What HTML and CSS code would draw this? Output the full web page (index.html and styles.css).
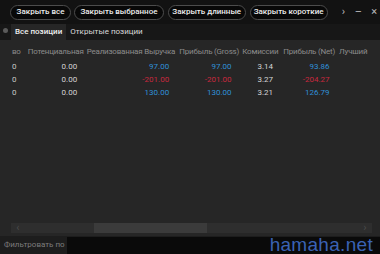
FILE: index.html
```html
<!doctype html>
<html>
  <head>
    <meta charset="utf-8">
    <link rel="stylesheet" href="styles.css">
  </head>
  <body>
    <div id="window">
      <div class="toolbar">
        <button class="pill w-all">Закрыть все</button>
        <button class="pill w-sel">Закрыть выбранное</button>
        <button class="pill w-long">Закрыть длинные</button>
        <button class="pill w-short">Закрыть короткие</button>
        <span class="tool more">&#8250;</span>
        <span class="tool min">&#8211;</span>
        <span class="tool close">&#215;</span>
      </div>

      <div class="tabs">
        <span class="dot"></span>
        <span class="tab active">Все позиции</span>
        <span class="tab">Открытые позиции</span>
      </div>

      <div class="grid">
        <div class="row head">
          <div class="c c1">во</div>
          <div class="c c2">Потенциальная</div>
          <div class="c c3">Реализованная Выручка</div>
          <div class="c c4">Прибыль (Gross)</div>
          <div class="c c5">Комиссии</div>
          <div class="c c6">Прибыль (Net)</div>
          <div class="c c7">Лучший</div>
        </div>
        <div class="row">
          <div class="c c1">0</div>
          <div class="c c2 num">0.00</div>
          <div class="c c3 num pos">97.00</div>
          <div class="c c4 num pos">97.00</div>
          <div class="c c5 num">3.14</div>
          <div class="c c6 num pos">93.86</div>
          <div class="c c7"></div>
        </div>
        <div class="row">
          <div class="c c1">0</div>
          <div class="c c2 num">0.00</div>
          <div class="c c3 num neg">-201.00</div>
          <div class="c c4 num neg">-201.00</div>
          <div class="c c5 num">3.27</div>
          <div class="c c6 num neg">-204.27</div>
          <div class="c c7"></div>
        </div>
        <div class="row">
          <div class="c c1">0</div>
          <div class="c c2 num">0.00</div>
          <div class="c c3 num pos">130.00</div>
          <div class="c c4 num pos">130.00</div>
          <div class="c c5 num">3.21</div>
          <div class="c c6 num pos">126.79</div>
          <div class="c c7"></div>
        </div>

        <div class="spacer"></div>

        <div class="hscroll">
          <span class="arrow">&#8249;</span>
          <div class="track">
            <div class="thumb"></div>
          </div>
          <span class="arrow">&#8250;</span>
        </div>
      </div>

      <div class="filter">
        <span class="label">Фильтровать по</span>
        <div class="input"></div>
      </div>

      <div class="watermark">hamaha.net</div>
    </div>
  </body>
</html>
```

FILE: styles.css
```css
html, body {
  margin: 0;
  padding: 0;
  background: #121212;
}

body {
  font-family: Roboto, "Noto Sans", sans-serif;
  font-size: 8px;
  color: #c8c8c8;
}

#window {
  position: relative;
  width: 380px;
  height: 254px;
  display: flex;
  flex-direction: column;
  overflow: hidden;
}

/* top buttons */

.toolbar {
  height: 24px;
  display: flex;
  align-items: center;
  padding: 0 0 0 10px;
  background: #121212;
}

.pill {
  height: 15px;
  padding: 0;
  margin-right: 3px;
  border: 1px solid #4c4c4c;
  border-radius: 8px;
  background: #080808;
  color: #ececec;
  font-family: inherit;
  font-size: 8px;
  font-weight: 500;
  line-height: 12px;
  white-space: nowrap;
  text-align: center;
}

.w-all { width: 62px; }
.w-sel { width: 91px; }
.w-long { width: 79px; margin-left: 1px; }
.w-short { width: 79px; margin-left: 1px; }

.tool {
  color: #bbbbbb;
  font-size: 11px;
  line-height: 12px;
  text-align: center;
  width: 12px;
}

.more {
  margin-left: 7px;
}

.min {
  margin-left: 3px;
}

.close {
  margin-left: 4px;
}

/* tabs */

.tabs {
  height: 16px;
  display: flex;
  align-items: stretch;
  background: #171717;
}

.dot {
  width: 5px;
  height: 5px;
  margin: 4px 3px 0 3px;
  border-radius: 50%;
  background: #5a5a5a;
}

.tab {
  padding: 2px 4px 0 4px;
  color: #d8d8d8;
  font-size: 8px;
  line-height: 12px;
}

.tab.active {
  background: #262626;
  font-weight: 500;
  color: #f0f0f0;
}

/* grid */

.grid {
  flex: 1;
  display: flex;
  flex-direction: column;
  background: #262626;
  padding-top: 4px;
}

.row {
  display: flex;
  height: 13px;
  line-height: 13px;
  padding-left: 10px;
  white-space: nowrap;
}

.row.head {
  height: 16px;
  line-height: 15px;
  color: #8c8c8c;
  letter-spacing: -0.2px;
}

.c {
  padding: 0 2px;
  overflow: hidden;
}

.row.head .c {
  overflow: visible;
}

.c1 { width: 12px; }
.c2 { width: 55px; }
.c3 { width: 89px; }
.c4 { width: 59px; }
.c5 { width: 38px; }
.c6 { width: 53px; }
.c7 { width: 40px; }

.num {
  text-align: right;
  padding-right: 7px;
  color: #d4d4d4;
}

.row .c2.num { width: 50px; }
.row .c3.num { width: 84px; }
.row .c4.num { width: 54px; }
.row .c5.num { width: 33px; }
.row .c6.num { width: 48px; }

.pos { color: #2f90d8; }
.neg { color: #c8283e; }

.spacer {
  flex: 1;
}

.hscroll {
  height: 10px;
  margin: 0 8px 3px 11px;
  display: flex;
  align-items: center;
  background: #2e2e2e;
}

.arrow {
  width: 14px;
  color: #4a4a4a;
  font-size: 11px;
  line-height: 10px;
  text-align: center;
}

.track {
  flex: 1;
  height: 10px;
}

.thumb {
  margin-left: 69px;
  width: 113px;
  height: 10px;
  background: #3b3b3b;
}

/* filter bar */

.filter {
  height: 18px;
  display: flex;
  background: #1d1d1d;
}

.label {
  width: 63px;
  padding-left: 4px;
  color: #7c7c7c;
  font-size: 8px;
  line-height: 18px;
  white-space: nowrap;
}

.input {
  flex: 1;
  margin-top: 1px;
  background: #0a0a0a;
}

.watermark {
  position: absolute;
  right: 7px;
  bottom: -2px;
  font-family: "Liberation Sans", Arial, sans-serif;
  font-size: 19px;
  color: #3a62b4;
  letter-spacing: 0.3px;
}
```
